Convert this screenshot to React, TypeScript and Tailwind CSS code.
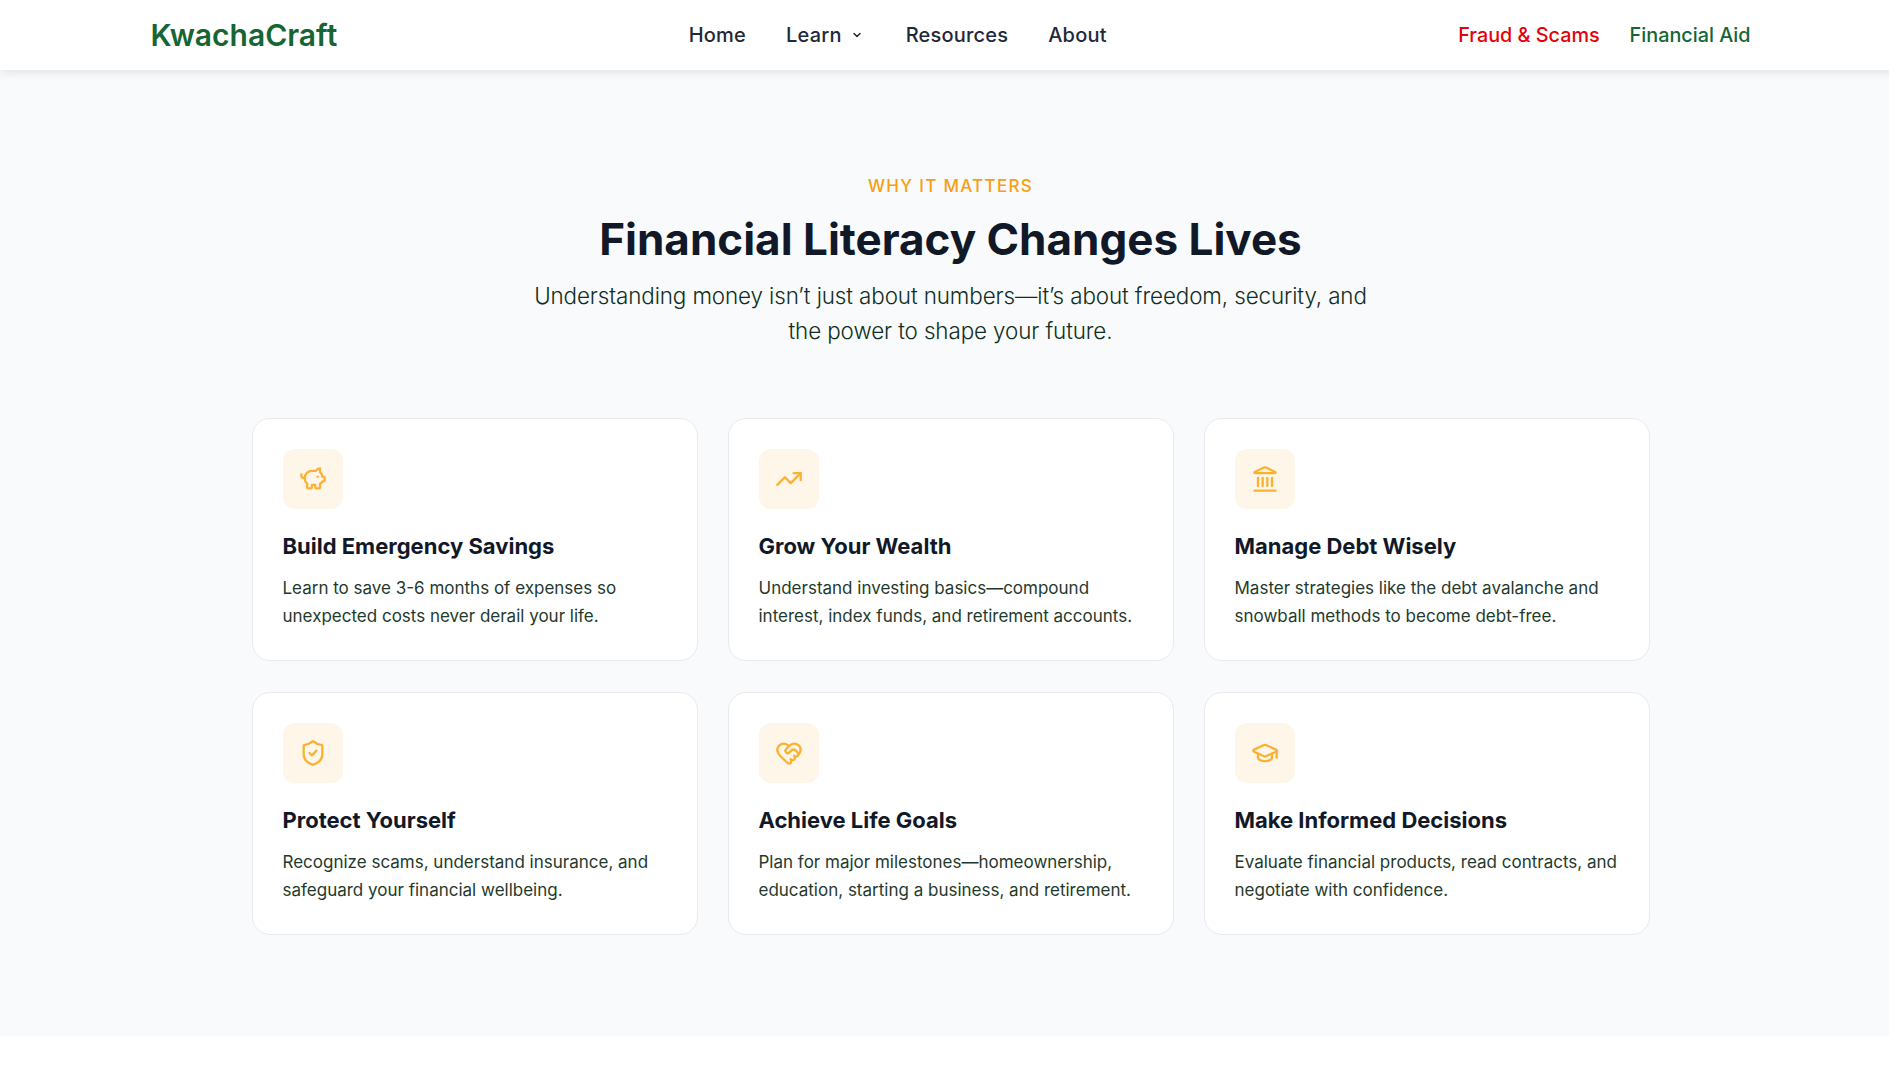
import React from 'react';
import { ChevronDown, GraduationCap, HeartHandshake, Landmark, PiggyBank, ShieldCheck, TrendingUp } from 'lucide-react';

const cards = [
  { icon: PiggyBank, title: 'Build Emergency Savings', text: ['Learn to save 3-6 months of expenses so', 'unexpected costs never derail your life.'] },
  { icon: TrendingUp, title: 'Grow Your Wealth', text: ['Understand investing basics—compound', 'interest, index funds, and retirement accounts.'] },
  { icon: Landmark, title: 'Manage Debt Wisely', text: ['Master strategies like the debt avalanche and', 'snowball methods to become debt-free.'] },
  { icon: ShieldCheck, title: 'Protect Yourself', text: ['Recognize scams, understand insurance, and', 'safeguard your financial wellbeing.'] },
  { icon: HeartHandshake, title: 'Achieve Life Goals', text: ['Plan for major milestones—homeownership,', 'education, starting a business, and retirement.'] },
  { icon: GraduationCap, title: 'Make Informed Decisions', text: ['Evaluate financial products, read contracts, and', 'negotiate with confidence.'] },
];

export default function App() {
  return (
    <div className="w-full overflow-hidden bg-white font-['Inter',sans-serif]">
      <div className="w-[1901px]">
        <nav className="relative z-10 h-[70px] bg-white shadow-[0_2px_10px_rgba(0,0,0,0.1)]">
          <div className="mx-auto flex h-full w-[1600px] items-center justify-between">
            <a className="text-[30px] font-semibold text-[#166534]">KwachaCraft</a>
            <ul className="flex items-center gap-10 text-[20px] font-medium tracking-[0.2px] text-[#1f2937]">
              <li>Home</li>
              <li className="mr-[3px] flex items-center gap-[9px]">Learn <ChevronDown size={12} strokeWidth={3} /></li>
              <li>Resources</li>
              <li>About</li>
            </ul>
            <div className="flex items-center gap-[30px] text-[19.8px] font-medium leading-[30px]">
              <a className="text-[#e7000b]">Fraud &amp; Scams</a>
              <a className="text-[#166534]">Financial Aid</a>
            </div>
          </div>
        </nav>

        <section className="h-[966px] bg-[#f9fafb] pt-[97px]">
          <div className="mx-auto w-[1398px]">
            <header className="flex flex-col items-center text-center">
              <span className="text-[17px] font-[550] leading-[38px] tracking-[1.3px] text-[#f79e12]">WHY IT MATTERS</span>
              <h2 className="mt-1 text-[44px] font-bold leading-[60px] text-[#111827]">Financial Literacy Changes Lives</h2>
              <p className="mt-[9px] text-[22.4px] font-[350] leading-[35px] tracking-[-0.1px] text-[#0f2e22]">
                Understanding money isn’t just about numbers—it’s about freedom, security, and<br />the power to shape your future.
              </p>
            </header>
            <div className="mt-[70px] grid grid-cols-3 gap-x-[30px] gap-y-[31px]">
              {cards.map((card) => (
                <article key={card.title} className="rounded-[18px] border border-[#e8eaee] bg-white p-[30px]">
                  <div className="flex h-[60px] w-[60px] items-center justify-center rounded-xl bg-[#fef6e8] text-[#f9b233]">
                    <card.icon size={28} />
                  </div>
                  <h3 className="mt-[19px] text-[22px] font-bold leading-[36px] text-[#111827]">{card.title}</h3>
                  <p className="mt-[10px] text-[17px] leading-[28px] text-[#1f3a2d]">
                    {card.text[0]}<br />{card.text[1]}
                  </p>
                </article>
              ))}
            </div>
          </div>
        </section>
      </div>
    </div>
  );
}
